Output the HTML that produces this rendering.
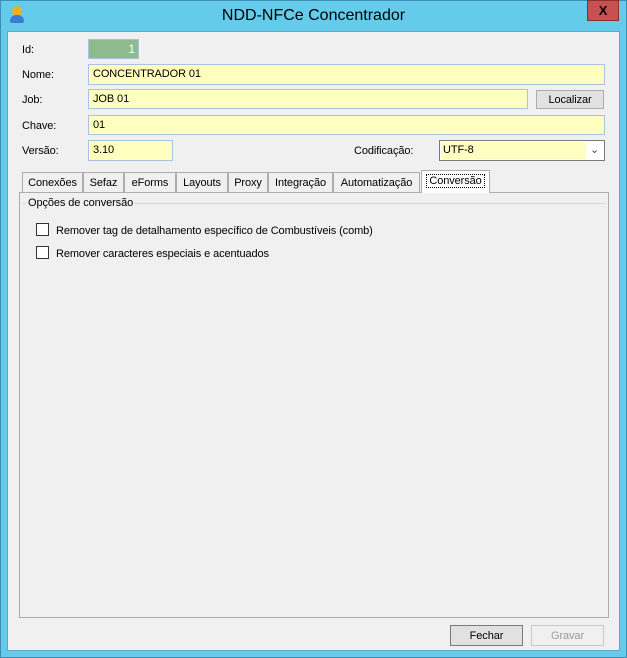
<!DOCTYPE html>
<html><head><meta charset="utf-8"><style>
*{box-sizing:border-box;margin:0;padding:0}
body{width:627px;height:658px;background:#65CBEA;font-family:"Liberation Sans",sans-serif;font-size:11px;letter-spacing:-0.1px;color:#000;position:relative;overflow:hidden}
.a{position:absolute}
.win{left:0;top:0;width:627px;height:658px;border:1px solid #3c8fb0}
.client{left:7px;top:31px;width:613px;height:620px;background:#f0f0f0;border:1px solid #5aa9c6}
.title{left:0;top:7px;width:627px;text-align:center;font-size:16px;letter-spacing:0;color:#000}
.close{left:587px;top:0;width:32px;height:21px;background:#c75050;border:1px solid #8a3030;color:#000;font-weight:bold;font-size:13px;text-align:center;line-height:19px}
.tb{background:#ffffc0;border:1px solid #a9c3e0;padding-left:4px;line-height:19px}
.btn{background:#e1e1e1;border:1px solid #adadad;text-align:center;line-height:18px}
.tab{top:172px;height:20px;border:1px solid #adadad;border-bottom:none;background:#f0f0f0;text-align:center;line-height:20px}
.cb{width:13px;height:13px;border:1px solid #333;background:#fff}
</style></head><body>
<div class="a win"></div>
<div class="a title">NDD-NFCe Concentrador</div>
<div class="a" style="left:12px;top:6px;width:10px;height:10px;border-radius:50%;background:#f0b020"></div>
<div class="a" style="left:10px;top:15px;width:14px;height:8px;border-radius:6px 6px 2px 2px;background:#3a7bd5"></div>
<div class="a close">X</div>
<div class="a client"></div>

<div class="a" style="left:22px;top:44px">Id:</div>
<div class="a" style="left:88px;top:39px;width:51px;height:20px;background:#8dbb8d;border:1px solid #a9c3e0;color:#fff;text-align:right;padding-right:3px;line-height:18px;font-size:12px">1</div>
<div class="a" style="left:22px;top:69px">Nome:</div>
<div class="a tb" style="left:88px;top:64px;width:517px;height:21px">CONCENTRADOR 01</div>
<div class="a" style="left:22px;top:94px">Job:</div>
<div class="a tb" style="left:88px;top:89px;width:440px;height:20px">JOB 01</div>
<div class="a btn" style="left:536px;top:90px;width:68px;height:19px">Localizar</div>
<div class="a" style="left:22px;top:120px">Chave:</div>
<div class="a tb" style="left:88px;top:115px;width:517px;height:20px">01</div>
<div class="a" style="left:22px;top:145px">Versão:</div>
<div class="a tb" style="left:88px;top:140px;width:85px;height:21px">3.10</div>
<div class="a" style="left:354px;top:145px">Codificação:</div>
<div class="a" style="left:439px;top:140px;width:166px;height:21px;border:1px solid #7a7a7a;background:#fff"></div>
<div class="a" style="left:441px;top:142px;width:145px;height:17px;background:#ffffc0;padding-left:2px;line-height:17px">UTF-8</div>
<div class="a" style="left:590px;top:143px;font-size:11px;color:#444">&#8964;</div>

<div class="a" style="left:19px;top:192px;width:590px;height:426px;border:1px solid #adadad;background:#f0f0f0"></div>
<div class="a tab" style="left:22px;width:61px">Conexões</div>
<div class="a tab" style="left:83px;width:41px">Sefaz</div>
<div class="a tab" style="left:124px;width:52px">eForms</div>
<div class="a tab" style="left:176px;width:52px">Layouts</div>
<div class="a tab" style="left:228px;width:40px">Proxy</div>
<div class="a tab" style="left:268px;width:65px">Integração</div>
<div class="a tab" style="left:333px;width:87px">Automatização</div>
<div class="a tab" style="left:421px;top:170px;width:69px;height:23px;background:#fff;border-color:#adadad;line-height:21px"><span style="outline:1px dotted #000;padding:0 2px">Conversão</span></div>

<div class="a" style="left:23px;top:203px;width:582px;height:1px;background:#d5d5d5"></div>
<div class="a" style="left:26px;top:197px;background:#f0f0f0;padding:0 2px">Opções de conversão</div>
<div class="a cb" style="left:36px;top:223px"></div>
<div class="a" style="left:56px;top:225px">Remover tag de detalhamento específico de Combustíveis (comb)</div>
<div class="a cb" style="left:36px;top:246px"></div>
<div class="a" style="left:56px;top:248px">Remover caracteres especiais e acentuados</div>

<div class="a btn" style="left:450px;top:625px;width:73px;height:21px;border-color:#7a7a7a;line-height:20px">Fechar</div>
<div class="a btn" style="left:531px;top:625px;width:73px;height:21px;background:#f0f0f0;border-color:#c8c8c8;color:#999;line-height:20px">Gravar</div>
</body></html>
